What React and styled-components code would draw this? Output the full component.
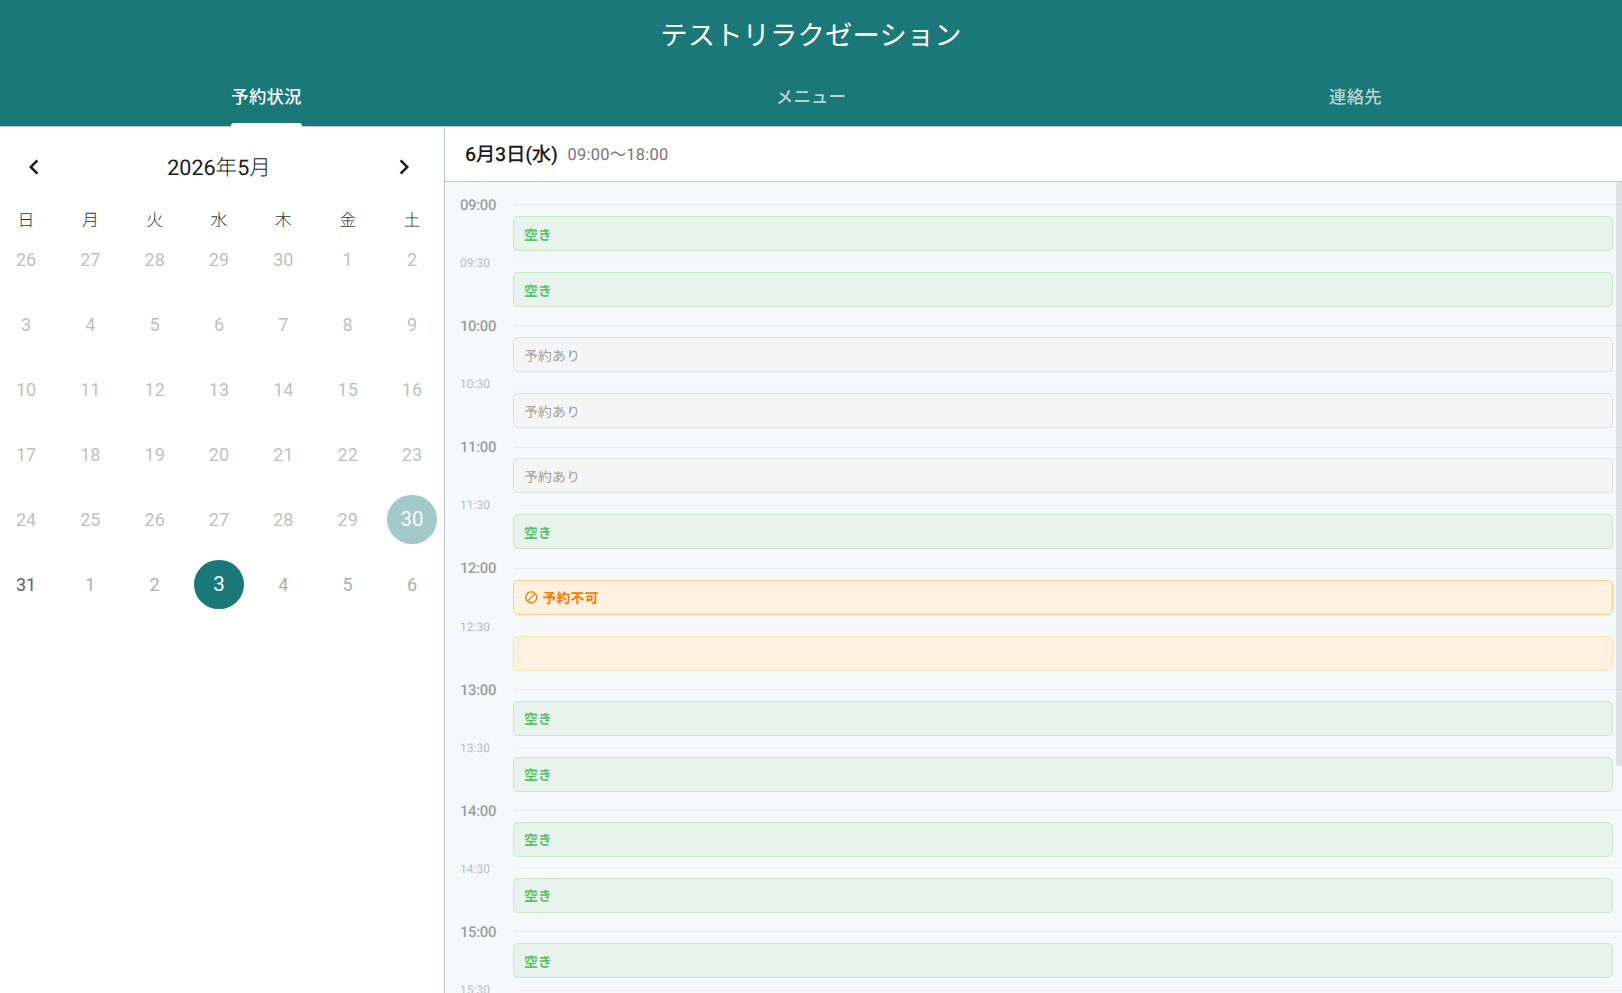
import React from "react";
import styled, { createGlobalStyle } from "styled-components";

const Global = createGlobalStyle`
  * { box-sizing: border-box; }
  html, body, #root { height: 100%; margin: 0; }
  body {
    overflow: hidden;
    background: #fff;
    font-family: Roboto, "Noto Sans CJK JP", sans-serif;
    color: #161d1d;
    text-rendering: geometricPrecision;
  }
  button { font: inherit; color: inherit; background: none; border: 0; padding: 0; }
`;

const Page = styled.div`
  height: 993px;
  display: flex;
  flex-direction: column;
  overflow: hidden;
`;

const Header = styled.header`
  flex: none;
  height: 127px;
  display: flex;
  flex-direction: column;
  background: #1b7878;
  border-bottom: 1px solid #bec9c8;
`;

const Title = styled.h1`
  margin: 0;
  height: 69px;
  padding-top: 2px;
  line-height: 69px;
  text-align: center;
  font-size: 27.28px;
  letter-spacing: 0.2px;
  font-weight: 400;
  color: #fff;
`;

const Tabs = styled.nav`
  flex: 1;
  display: grid;
  grid-template-columns: 533px 1fr 533px;
`;

const Tab = styled.button`
  display: flex;
  justify-content: center;
  font-size: 17.36px;
  font-weight: 500;
  letter-spacing: 0.25px;
  color: ${(p) => (p.$active ? "#fff" : "rgba(255, 255, 255, 0.7)")};
`;

const TabLabel = styled.span`
  height: 58px;
  line-height: 57px;
  display: flex;
  flex-direction: column;
  justify-content: space-between;
  &::after {
    content: "";
    height: 4px;
    border-radius: 3px 3px 0 0;
    background: ${(p) => (p.$active ? "#fff" : "transparent")};
  }
`;

const TabText = styled.span`
  height: 54px;
  flex: none;
`;

const Body = styled.main`
  flex: 1;
  min-height: 0;
  display: flex;
`;

const CalendarPane = styled.section`
  flex: none;
  width: 445px;
  border-right: 1px solid #bec9c8;
  background: #fff;
`;

const MonthBar = styled.div`
  display: flex;
  align-items: center;
  justify-content: space-between;
  height: 81px;
  padding: 0 22px 1px 16px;
`;

const MonthName = styled.span`
  padding-top: 4px;
  font-size: 21.5px;
  font-weight: 400;
  line-height: 30px;
`;

const MonthUnit = styled.span`
  font-weight: 300;
`;

const ArrowButton = styled.button`
  width: 36px;
  height: 36px;
  display: grid;
  place-items: center;
`;

const CalendarGrid = styled.div`
  display: grid;
  grid-template-columns: repeat(7, 50px);
  grid-auto-rows: ${(p) => p.$row}px;
  justify-content: space-between;
  padding: 0 7px 0 1px;
`;

const Weekday = styled.div`
  overflow: hidden;
  text-align: center;
  font-size: 16.9px;
  font-weight: 300;
  line-height: 27px;
  color: #333;
`;

const DayCell = styled.div`
  display: grid;
  place-items: center;
`;

const dayColors = { past: "#bfbfbf", open: "#626262", next: "#aeaeae", today: "#fafafa", selected: "#fafafa" };
const dayFills = { today: "#a4c9c9", selected: "#1b7878" };

const Day = styled.button`
  width: 49.6px;
  height: 49.6px;
  border-radius: 50%;
  line-height: ${(p) => (dayFills[p.$state] ? 48 : 49.6)}px;
  padding-bottom: ${(p) => (dayFills[p.$state] ? 1.6 : 0)}px;
  text-align: center;
  font-size: ${(p) => (dayFills[p.$state] ? 20.5 : 18)}px;
  color: ${(p) => dayColors[p.$state]};
  background: ${(p) => dayFills[p.$state] || "transparent"};
`;

const SchedulePane = styled.section`
  flex: 1;
  min-width: 0;
  display: flex;
  flex-direction: column;
  background: #f5f9fa;
`;

const DateBar = styled.div`
  flex: none;
  height: 55px;
  display: flex;
  align-items: center;
  gap: 10px;
  padding: 0 0 2px 20px;
  background: #fff;
  border-bottom: 1px solid #bec9c8;
`;

const DateText = styled.span`
  padding-bottom: 2px;
  font-size: 19.5px;
  font-weight: 500;
  letter-spacing: -0.25px;
`;

const HoursText = styled.span`
  font-size: 16.4px;
  letter-spacing: 0.28px;
  color: #757575;
`;

const Timeline = styled.div`
  position: relative;
  flex: 1;
  min-height: 0;
  overflow: hidden;
  padding: 11px 0 0 15px;
`;

const HourBlock = styled.div`
  height: 121.2px;
`;

const TimeRow = styled.div`
  display: grid;
  grid-template-columns: 53px 1fr;
  align-items: center;
  height: ${(p) => (p.$half ? 21 : 23)}px;
  padding-top: ${(p) => (p.$half ? 3 : 0.6)}px;
  line-height: 18px;
  font-size: ${(p) => (p.$half ? 12 : 14.88)}px;
  font-weight: ${(p) => (p.$half ? 400 : 500)};
  letter-spacing: ${(p) => (p.$half ? 0 : -0.35)}px;
  color: ${(p) => (p.$half ? "#bdbdbd" : "#9e9e9e")};
  &::after {
    content: "";
    height: 1px;
    background: ${(p) => (p.$half ? "#f2f6f7" : "#ecefef")};
  }
`;

const slotStyles = {
  free: { bg: "#e8f3ed", line: "#c5e7ca", text: "#5abf6a", weight: 700 },
  booked: { bg: "#f5f5f5", line: "#e0e0e0", text: "#9e9e9e", weight: 400 },
  closed: { bg: "#fff1df", line: "#ffcc80", text: "#f57c00", weight: 700 },
  closedRest: { bg: "#fff1df", line: "#ffe0b2", text: "#f57c00", weight: 700 },
};

const SlotBox = styled.div`
  height: 35px;
  margin: 0 9px 0 53px;
  padding-left: 10px;
  display: flex;
  align-items: center;
  gap: 4px;
  border: 1px solid ${(p) => slotStyles[p.$kind].line};
  border-radius: 5px;
  background: ${(p) => slotStyles[p.$kind].bg};
  color: ${(p) => slotStyles[p.$kind].text};
  font-size: 13.8px;
  letter-spacing: 0.25px;
  font-weight: ${(p) => slotStyles[p.$kind].weight};
  line-height: 20px;
  svg { flex: none; }
`;

const SlotText = styled.span`
  padding-top: 4px;
`;

const ScrollThumb = styled.div`
  position: absolute;
  top: 0;
  right: 0;
  width: 6px;
  height: 584px;
  border-radius: 3px 0 0 3px;
  background: rgba(0, 0, 0, 0.09);
`;

const Arrow = ({ right }) => (
  <svg width="30" height="30" viewBox="0 0 24 24" fill="#161d1d">
    <path
      d={
        right
          ? "M10 6L8.59 7.41 13.17 12l-4.58 4.59L10 18l6-6z"
          : "M15.41 7.41L14 6l-6 6 6 6 1.41-1.41L10.83 12z"
      }
    />
  </svg>
);

const BlockIcon = () => (
  <svg width="14.5" height="14.5" viewBox="0 0 24 24" fill="#f57c00">
    <path d="M12 2C6.48 2 2 6.48 2 12s4.48 10 10 10 10-4.48 10-10S17.52 2 12 2zM4 12c0-4.42 3.58-8 8-8 1.85 0 3.55.63 4.9 1.69L5.69 16.9C4.63 15.55 4 13.85 4 12zm8 8c-1.85 0-3.55-.63-4.9-1.69L18.31 7.1C19.37 8.45 20 10.15 20 12c0 4.42-3.58 8-8 8z" />
  </svg>
);

const labels = { free: "空き", booked: "予約あり", closed: "予約不可", closedRest: "" };

const Slot = ({ kind }) => (
  <SlotBox $kind={kind}>
    {kind === "closed" && <BlockIcon />}
    <SlotText>{labels[kind]}</SlotText>
  </SlotBox>
);

const days = [26, 27, 28, 29, 30, ...Array.from({ length: 31 }, (_, i) => i + 1), 1, 2, 3, 4, 5, 6];

const dayState = (i) => {
  if (i === 34) return "today";
  if (i === 35) return "open";
  if (i === 38) return "selected";
  return i < 34 ? "past" : "next";
};

const hours = [
  ["09", "free", "free"],
  ["10", "booked", "booked"],
  ["11", "booked", "free"],
  ["12", "closed", "closedRest"],
  ["13", "free", "free"],
  ["14", "free", "free"],
  ["15", "free", "free"],
];

const tabs = ["予約状況", "メニュー", "連絡先"];

export default function App() {
  return (
    <Page>
      <Global />
      <Header>
        <Title>テストリラクゼーション</Title>
        <Tabs>
          {tabs.map((t, i) => (
            <Tab key={t} $active={i === 0}>
              <TabLabel $active={i === 0}>
                <TabText>{t}</TabText>
              </TabLabel>
            </Tab>
          ))}
        </Tabs>
      </Header>
      <Body>
        <CalendarPane>
          <MonthBar>
            <ArrowButton aria-label="前の月"><Arrow /></ArrowButton>
            <MonthName>
              2026<MonthUnit>年</MonthUnit>5<MonthUnit>月</MonthUnit>
            </MonthName>
            <ArrowButton aria-label="次の月"><Arrow right /></ArrowButton>
          </MonthBar>
          <CalendarGrid $row={19}>
            {[..."日月火水木金土"].map((d) => (
              <Weekday key={d}>{d}</Weekday>
            ))}
          </CalendarGrid>
          <CalendarGrid $row={65}>
            {days.map((d, i) => (
              <DayCell key={i}>
                <Day $state={dayState(i)}>{d}</Day>
              </DayCell>
            ))}
          </CalendarGrid>
        </CalendarPane>
        <SchedulePane>
          <DateBar>
            <DateText>6月3日(水)</DateText>
            <HoursText>09:00〜18:00</HoursText>
          </DateBar>
          <Timeline>
            {hours.map(([h, first, second]) => (
              <HourBlock key={h}>
                <TimeRow>{h}:00</TimeRow>
                <Slot kind={first} />
                <TimeRow $half>{h}:30</TimeRow>
                <Slot kind={second} />
              </HourBlock>
            ))}
            <ScrollThumb />
          </Timeline>
        </SchedulePane>
      </Body>
    </Page>
  );
}
